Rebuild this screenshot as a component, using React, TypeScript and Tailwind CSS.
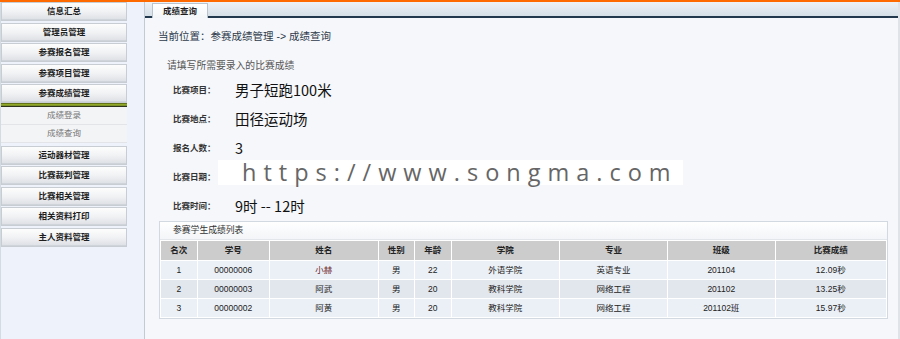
import React from "react";

const FONT = { fontFamily: '"Liberation Sans","Noto Sans CJK SC",sans-serif' };

function MenuButton({ label }: { label: string }) {
  return (
    <div className="h-[19px] w-[126px] flex items-center justify-center border border-[#c8cdd4] bg-gradient-to-b from-[#fdfdfd] via-[#f1f2f4] to-[#dcdfe4] text-[8.5px] font-bold text-[#1e1e1e] shadow-[inset_0_-1px_0_#cfd4da]">
      {label}
    </div>
  );
}

function SubItem({ label }: { label: string }) {
  return (
    <div className="h-[18px] w-[126px] flex items-center justify-center border-b border-[#e2e4e8] bg-[#f3f4f6] text-[8.5px] text-[#777]">
      {label}
    </div>
  );
}

const rows = [
  { rank: "1", no: "00000006", name: "小赫", sex: "男", age: "22", college: "外语学院", major: "英语专业", cls: "201104", score: "12.09秒", bg: "bg-[#ebf0f6]", nameColor: "text-[#6b1f1f]" },
  { rank: "2", no: "00000003", name: "阿武", sex: "男", age: "20", college: "教科学院", major: "网络工程", cls: "201102", score: "13.25秒", bg: "bg-[#e2e7ee]", nameColor: "text-[#222]" },
  { rank: "3", no: "00000002", name: "阿黄", sex: "男", age: "20", college: "教科学院", major: "网络工程", cls: "201102班", score: "15.97秒", bg: "bg-[#ebf0f6]", nameColor: "text-[#222]" },
];

const headers = ["名次", "学号", "姓名", "性别", "年龄", "学院", "专业", "班级", "比赛成绩"];
const widths = ["w-[35.5px]", "w-[71.5px]", "w-[107.5px]", "w-[35.5px]", "w-[35.5px]", "w-[107.5px]", "w-[107px]", "w-[106.5px]", ""];

export default function App() {
  return (
    <div className="w-[900px] h-[339px] flex flex-col overflow-hidden bg-[#f5f7fa]" style={FONT}>
      <div className="h-[2px] bg-[#ff6a00] shrink-0" />
      <div className="flex flex-1 min-h-0">
        {/* Sidebar */}
        <div className="w-[145px] shrink-0 bg-[#eef3fb] border-r border-[#c3cad3] border-l border-l-[#d5dbe3] flex flex-col gap-[1.5px]">
          <MenuButton label="信息汇总" />
          <MenuButton label="管理员管理" />
          <MenuButton label="参赛报名管理" />
          <MenuButton label="参赛项目管理" />
          <div className="flex flex-col">
            <MenuButton label="参赛成绩管理" />
            <div className="h-[4px] w-[126px] bg-gradient-to-b from-[#4d5a12] via-[#a9c42c] to-[#0d0d0d]" />
            <SubItem label="成绩登录" />
            <SubItem label="成绩查询" />
          </div>
          <div className="mt-[1px] flex flex-col gap-[1.5px]">
            <MenuButton label="运动器材管理" />
            <MenuButton label="比赛裁判管理" />
            <MenuButton label="比赛相关管理" />
            <MenuButton label="相关资料打印" />
            <MenuButton label="主人资料管理" />
          </div>
        </div>

        {/* Main */}
        <div className="flex-1 flex flex-col relative border-r-[3px] border-[#e0e4e9]">
          <div className="h-[16px] shrink-0 flex items-end pl-[7px] bg-gradient-to-b from-[#eef2f6] to-[#d6dfe7] border-b-2 border-[#22384c]">
            <div className="relative z-10 -mb-[2px] h-[15px] w-[56px] flex items-center justify-center border-x border-t border-[#b9c4ce] bg-gradient-to-b from-[#ffffff] to-[#f3f6f8] text-[8.5px] font-bold text-[#1e1e1e]">
              成绩查询
            </div>
          </div>

          <div className="flex flex-col pl-[13px] pr-[10px]">
            <div className="mt-[12px] h-[14px] flex items-center text-[10.5px] text-[#2e3a4a]">
              当前位置：参赛成绩管理 -&gt; 成绩查询
            </div>
            <div className="mt-[15px] h-[14px] flex items-center pl-[9px] text-[9.8px] text-[#555]">
              请填写所需要录入的比赛成绩
            </div>
            <div className="mt-[2.5px] flex flex-col pl-[15px]">
              {[
                ["比赛项目：", "男子短跑100米"],
                ["比赛地点：", "田径运动场"],
                ["报名人数：", "3"],
                ["比赛日期：", ""],
                ["比赛时间：", "9时 -- 12时"],
              ].map(([l, v]) => (
                <div key={l} className="h-[29px] flex items-center">
                  <div className="w-[62px] text-[8.5px] font-bold text-[#333]">{l}</div>
                  <div className="text-[14.5px] text-[#111]" style={{ fontFamily: '"Noto Sans CJK SC",sans-serif' }}>{v}</div>
                </div>
              ))}
            </div>

            <div className="mt-[0.5px] ml-[1px] w-[729px] border border-[#d3d9e0] bg-white">
              <div className="h-[18px] flex items-center pl-[13px] text-[8.8px] text-[#333] bg-gradient-to-b from-[#ffffff] to-[#f3f5f8] border-b border-[#e3e7ec]">
                参赛学生成绩列表
              </div>
              <table className="w-full table-fixed border-separate border-spacing-[1.5px] text-[8.5px]">
                <thead>
                  <tr className="h-[19px]">
                    {headers.map((h, i) => (
                      <th key={h} className={`${widths[i]} bg-[#cccccc] font-bold text-[#222] text-center p-0`}>{h}</th>
                    ))}
                  </tr>
                </thead>
                <tbody>
                  {rows.map((r) => (
                    <tr key={r.rank} className="h-[18px] text-[#222] text-center">
                      <td className={`${r.bg} p-0`}>{r.rank}</td>
                      <td className={`${r.bg} p-0`}>{r.no}</td>
                      <td className={`${r.bg} p-0 ${r.nameColor}`}>{r.name}</td>
                      <td className={`${r.bg} p-0`}>{r.sex}</td>
                      <td className={`${r.bg} p-0`}>{r.age}</td>
                      <td className={`${r.bg} p-0`}>{r.college}</td>
                      <td className={`${r.bg} p-0`}>{r.major}</td>
                      <td className={`${r.bg} p-0`}>{r.cls}</td>
                      <td className={`${r.bg} p-0`}>{r.score}</td>
                    </tr>
                  ))}
                </tbody>
              </table>
            </div>
          </div>

          {/* watermark overlay */}
          <div className="absolute left-[73px] top-[158px] w-[465px] h-[25px] bg-white flex items-center pl-[24px]">
            <span className="text-[23.5px] leading-[25px] text-[#666] tracking-[7px] whitespace-nowrap" style={{ fontFamily: '"Open Sans","DejaVu Sans",sans-serif' }}>
              https://www.songma.com
            </span>
          </div>
        </div>
      </div>
    </div>
  );
}
